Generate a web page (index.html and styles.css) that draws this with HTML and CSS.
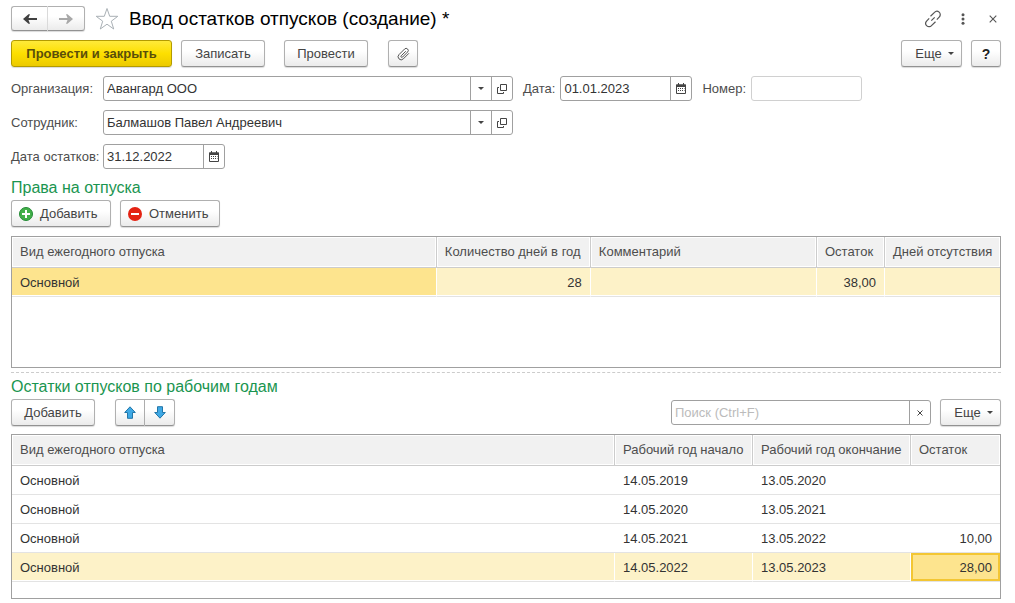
FILE: index.html
```html
<!DOCTYPE html>
<html lang="ru">
<head>
    <meta charset="UTF-8">
    <meta name="viewport" content="width=device-width, initial-scale=1.0">
    <title>Ввод остатков отпусков (создание) *</title>
    <link rel="stylesheet" href="styles.css">
</head>
<body>
<header class="title-bar">
    <div class="button-group nav-group">
        <button type="button" class="button" aria-label="Назад">
            <svg width="14" height="12" viewBox="0 0 14 12"><path d="M0 6 5.500 1.200H7L5.500 4.900H14V7.100H5.500L7 10.800H5.500Z" fill="#404040"/></svg>
        </button>
        <button type="button" class="button" aria-label="Вперед">
            <svg width="14" height="12" viewBox="0 0 14 12"><path d="M14 6 8.500 1.200H7L8.500 4.900H0V7.100H8.500L7 10.800H8.500Z" fill="#a8a8a8"/></svg>
        </button>
    </div>
    <button type="button" class="plain-button star-button" aria-label="В избранное">
        <svg width="24" height="24" viewBox="0 0 24 24"><path d="M12 1.500 14.700 9.300H22.800L16.300 14.200 18.700 22 12 17.200 5.300 22 7.700 14.200 1.200 9.300H9.300Z" fill="#fff" stroke="#a9b0b5"/></svg>
    </button>
    <h1 class="page-title">Ввод остатков отпусков (создание) *</h1>
    <div class="window-tools">
        <button type="button" class="plain-button" aria-label="Получить ссылку">
            <svg width="18" height="18" viewBox="0 0 18 18" fill="none" stroke="#555" stroke-width="1.200"><path d="M6.500 6.200 10.500 2.400a3.200 3.200 0 0 1 4.900 4.400L12.800 9.600M11.500 11.800 7.500 15.600a3.200 3.200 0 0 1-4.900-4.400L5.200 8.400M7.300 10.700 10.700 7.300"/></svg>
        </button>
        <button type="button" class="plain-button" aria-label="Меню">
            <svg width="4" height="12" viewBox="0 0 4 12" fill="#555"><circle cx="2" cy="1.800" r="1.500"/><circle cx="2" cy="6" r="1.500"/><circle cx="2" cy="10.200" r="1.500"/></svg>
        </button>
        <button type="button" class="plain-button" aria-label="Закрыть">
            <svg width="8" height="8" viewBox="0 0 8 8"><path d="M.7.7 7.300 7.300M7.300.7.7 7.300" stroke="#555" stroke-width="1.100"/></svg>
        </button>
    </div>
</header>

<div class="toolbar command-bar">
    <button type="button" class="button primary">Провести и закрыть</button>
    <button type="button" class="button save-button">Записать</button>
    <button type="button" class="button post-button">Провести</button>
    <button type="button" class="button icon-button" aria-label="Присоединенные файлы">
        <svg width="14" height="14" viewBox="0 0 14 14" fill="none" stroke="#555"><path d="M9.800 4.200 5.200 8.800a.9.9 0 0 0 1.300 1.300L11.600 5a2.100 2.100 0 0 0-3-3L3 7.600a3 3 0 0 0 4.300 4.300L12.900 6.300"/></svg>
    </button>
    <button type="button" class="button more-button push-right">Еще <span class="caret"></span></button>
    <button type="button" class="button icon-button help-button">?</button>
</div>

<form class="fields">
    <div class="field-row">
        <label for="organization" class="main-label">Организация:</label>
        <div class="field wide">
            <input type="text" id="organization" value="Авангард ООО">
            <button type="button" class="field-button" aria-label="Выбрать организацию"><span class="caret"></span></button>
            <button type="button" class="field-button" aria-label="Открыть организацию">
                <svg width="10" height="10" viewBox="0 0 10 10" fill="none" stroke="#444"><path d="M3.500.5h6v6h-6zM2 3.500H.5v6h6V8"/></svg>
            </button>
        </div>
        <label for="date">Дата:</label>
        <div class="field date">
            <input type="text" id="date" value="01.01.2023">
            <button type="button" class="field-button" aria-label="Выбрать дату">
                <svg width="10" height="11" viewBox="0 0 10 11"><path d="M.5 2h9v8.500h-9z" fill="#fff" stroke="#444"/><path d="M0 1.500h10V4H0zM2 0h1v2H2zM7 0h1v2H7z" fill="#444"/><path d="M2 5.500h6.500M2 7.500h6.500" stroke="#444" stroke-dasharray="1 1"/></svg>
            </button>
        </div>
        <label for="number">Номер:</label>
        <div class="field number">
            <input type="text" id="number">
        </div>
    </div>
    <div class="field-row">
        <label for="employee" class="main-label">Сотрудник:</label>
        <div class="field wide">
            <input type="text" id="employee" value="Балмашов Павел Андреевич">
            <button type="button" class="field-button" aria-label="Выбрать сотрудника"><span class="caret"></span></button>
            <button type="button" class="field-button" aria-label="Открыть сотрудника">
                <svg width="10" height="10" viewBox="0 0 10 10" fill="none" stroke="#444"><path d="M3.500.5h6v6h-6zM2 3.500H.5v6h6V8"/></svg>
            </button>
        </div>
    </div>
    <div class="field-row">
        <label for="balance-date" class="main-label">Дата остатков:</label>
        <div class="field balance-date">
            <input type="text" id="balance-date" value="31.12.2022">
            <button type="button" class="field-button" aria-label="Выбрать дату остатков">
                <svg width="10" height="11" viewBox="0 0 10 11"><path d="M.5 2h9v8.500h-9z" fill="#fff" stroke="#444"/><path d="M0 1.500h10V4H0zM2 0h1v2H2zM7 0h1v2H7z" fill="#444"/><path d="M2 5.500h6.500M2 7.500h6.500" stroke="#444" stroke-dasharray="1 1"/></svg>
            </button>
        </div>
    </div>
</form>

<section class="rights">
    <h2>Права на отпуска</h2>
    <div class="toolbar">
        <button type="button" class="button with-icon">
            <svg width="14" height="14" viewBox="0 0 14 14"><circle cx="7" cy="7" r="6.500" fill="#43b04a" stroke="#248a35"/><path d="M7 3v8M3 7h8" stroke="#fff" stroke-width="2"/></svg>
            Добавить
        </button>
        <button type="button" class="button with-icon">
            <svg width="14" height="14" viewBox="0 0 14 14"><circle cx="7" cy="7" r="7" fill="#e42313"/><path d="M3 7h8" stroke="#fff" stroke-width="2"/></svg>
            Отменить
        </button>
    </div>
    <div class="table-box rights-box">
        <table>
            <colgroup>
                <col class="col-kind">
                <col class="col-days">
                <col>
                <col class="col-rest">
                <col class="col-absence">
            </colgroup>
            <thead>
            <tr>
                <th>Вид ежегодного отпуска</th>
                <th>Количество дней в год</th>
                <th>Комментарий</th>
                <th>Остаток</th>
                <th>Дней отсутствия</th>
            </tr>
            </thead>
            <tbody>
            <tr class="selected">
                <td class="current">Основной</td>
                <td class="num">28</td>
                <td></td>
                <td class="num">38,00</td>
                <td></td>
            </tr>
            </tbody>
        </table>
    </div>
</section>

<section class="balances">
    <h2>Остатки отпусков по рабочим годам</h2>
    <div class="toolbar">
        <button type="button" class="button add-button">Добавить</button>
        <div class="button-group move-group">
            <button type="button" class="button" aria-label="Переместить вверх">
                <svg width="12" height="13" viewBox="0 0 12 13"><path d="M6 .8 11.300 6.500H8.500V12.300H3.500V6.500H.7Z" fill="#3fa9e5" stroke="#2276a8"/></svg>
            </button>
            <button type="button" class="button" aria-label="Переместить вниз">
                <svg width="12" height="13" viewBox="0 0 12 13"><path d="M6 12.200 11.300 6.500H8.500V.7H3.500V6.500H.7Z" fill="#3fa9e5" stroke="#2276a8"/></svg>
            </button>
        </div>
        <div class="field search push-right">
            <input type="text" placeholder="Поиск (Ctrl+F)" aria-label="Поиск">
            <button type="button" class="field-button" aria-label="Очистить">
                <svg width="6" height="6" viewBox="0 0 6 6"><path d="M.5.5 5.500 5.500M5.500.5.5 5.500" stroke="#444"/></svg>
            </button>
        </div>
        <button type="button" class="button more-button">Еще <span class="caret"></span></button>
    </div>
    <div class="table-box balances-box">
        <table>
            <colgroup>
                <col>
                <col class="col-start">
                <col class="col-end">
                <col class="col-balance">
            </colgroup>
            <thead>
            <tr>
                <th>Вид ежегодного отпуска</th>
                <th>Рабочий год начало</th>
                <th>Рабочий год окончание</th>
                <th>Остаток</th>
            </tr>
            </thead>
            <tbody>
            <tr>
                <td>Основной</td>
                <td>14.05.2019</td>
                <td>13.05.2020</td>
                <td></td>
            </tr>
            <tr>
                <td>Основной</td>
                <td>14.05.2020</td>
                <td>13.05.2021</td>
                <td></td>
            </tr>
            <tr>
                <td>Основной</td>
                <td>14.05.2021</td>
                <td>13.05.2022</td>
                <td class="num">10,00</td>
            </tr>
            <tr class="selected">
                <td>Основной</td>
                <td>14.05.2022</td>
                <td>13.05.2023</td>
                <td class="num current focused">28,00</td>
            </tr>
            </tbody>
        </table>
    </div>
</section>
</body>
</html>
```
FILE: styles.css
```css
* {
    box-sizing: border-box;
}
body {
    font-family: "Liberation Sans", Arial, sans-serif;
    font-size: 13px;
    margin: 0;
    padding: 6px 14px 4px 11px;
    background-color: #fff;
    color: #333;
}
button, input {
    font: inherit;
    color: inherit;
}
svg {
    display: block;
    flex: none;
}

/* Buttons */
.button {
    display: flex;
    align-items: center;
    justify-content: center;
    height: 27px;
    padding: 0 13px;
    border: 1px solid #b0b0b0;
    border-bottom-color: #929292;
    border-radius: 3px;
    background: linear-gradient(#fff 40%, #ebebeb);
    box-shadow: 0 1px 1px rgba(0, 0, 0, 0.15);
    color: #444;
    white-space: nowrap;
    cursor: pointer;
}
.primary {
    width: 161px;
    padding: 0;
    border-color: #b39b00;
    background: linear-gradient(#ffea3a, #fddf00 50%, #ecca00);
    color: #5a4e0a;
    font-weight: bold;
}
.icon-button {
    width: 30px;
    padding: 0;
}
.save-button, .post-button, .add-button {
    width: 84px;
    padding: 0;
}
.more-button {
    width: 61px;
    padding: 0 0 0 6px;
    gap: 6px;
}
.help-button {
    font-size: 14px;
    font-weight: bold;
    color: #222;
}
.with-icon {
    justify-content: flex-start;
    width: 100px;
    padding: 0 0 0 7px;
    gap: 7px;
}
.plain-button {
    display: flex;
    align-items: center;
    justify-content: center;
    padding: 0;
    border: none;
    background: none;
    cursor: pointer;
}
.button-group {
    display: flex;
}
.button-group .button {
    padding: 0;
}
.button-group .button:first-child {
    border-radius: 3px 0 0 3px;
}
.button-group .button:last-child {
    border-left: none;
    border-radius: 0 3px 3px 0;
}
.nav-group .button {
    width: 37px;
    height: 25px;
}
.nav-group .button:first-child {
    border-right-color: #ddd;
}
.move-group {
    margin-left: 11px;
}
.move-group .button {
    width: 30px;
}
.caret {
    border: 3px solid transparent;
    border-top-color: #444;
    border-bottom: none;
}

/* Title */
.title-bar {
    display: flex;
    align-items: center;
    height: 25px;
}
.star-button {
    margin: 0 10px;
}
.page-title {
    margin: 0;
    font-size: 19px;
    font-weight: normal;
    color: #000;
}
.window-tools {
    display: flex;
    align-items: center;
    margin: 0 -7px 0 auto;
}
.window-tools .plain-button {
    width: 30px;
    height: 24px;
}

.toolbar {
    display: flex;
    align-items: center;
    gap: 9px;
}
.command-bar {
    margin: 9px 0;
}
.post-button {
    margin: 0 11px 0 10px;
}
.push-right {
    margin-left: auto;
}

/* Fields */
.fields {
    display: flex;
    flex-direction: column;
    gap: 9px;
    color: #4d4d4d;
}
.field-row {
    display: flex;
    align-items: center;
}
.field-row label {
    flex: none;
    margin: 0 5px 0 10px;
}
.field-row .main-label {
    width: 92px;
    margin: 0;
}
.field {
    display: flex;
    height: 25px;
    border: 1px solid #a0a0a0;
    border-radius: 3px;
    background-color: #fff;
    color: #333;
}
.field input {
    flex: 1;
    min-width: 0;
    padding: 0 3px;
    border: none;
    border-radius: 3px;
    outline: none;
    background: none;
}
.field input::placeholder {
    color: #bbb;
    opacity: 1;
}
.field-button {
    display: flex;
    align-items: center;
    justify-content: center;
    width: 21px;
    padding: 0;
    border: none;
    border-left: 1px solid #a0a0a0;
    background: none;
    cursor: pointer;
}
.wide {
    flex: 0 1 410px;
}
.date {
    width: 132px;
}
.number {
    width: 111px;
    border-color: #d0d0d0;
}
.balance-date {
    width: 122px;
}
.search {
    flex: 0 1 260px;
}

/* Sections */
h2 {
    margin: 0 0 2px;
    font-size: 16px;
    font-weight: normal;
    line-height: 20px;
    color: #1a9550;
}
.rights {
    padding: 9px 0 4px;
    border-bottom: 1px dashed #ccc;
}
.balances {
    padding-top: 4px;
}

/* Tables */
.table-box {
    border: 1px solid #a0a0a0;
}
.rights-box {
    min-height: 132px;
    margin-top: 9px;
}
.balances-box {
    min-height: 165px;
    margin-top: 8px;
}
table {
    width: 100%;
    table-layout: fixed;
    border-collapse: separate;
    border-spacing: 0;
}
th, td {
    padding: 0 8px;
    text-align: left;
    white-space: nowrap;
}
th {
    height: 31px;
    padding-bottom: 2px;
    border-right: 1px solid #ccc;
    border-bottom: 1px solid #ccc;
    background-color: #f1f1f1;
    box-shadow: inset 0 0 0 1px #fff;
    color: #4d4d4d;
    font-weight: normal;
}
th:last-child {
    border-right: none;
}
td {
    height: 29px;
    border-bottom: 1px solid #e3e3e3;
}
.selected td {
    border-right: 1px solid #fff;
    background-color: #fdf2c8;
    box-shadow: inset 0 -1px #fff;
}
.selected td:last-child {
    border-right: none;
}
.selected .current {
    background-color: #fde48e;
}
.selected .focused {
    box-shadow: inset 0 0 0 2px #f3c633;
}
.num {
    text-align: right;
}
.col-kind {
    width: 43%;
}
.col-days {
    width: 154px;
}
.col-rest {
    width: 68px;
}
.col-absence {
    width: 115px;
}
.col-start {
    width: 138px;
}
.col-end {
    width: 158px;
}
.col-balance {
    width: 89px;
}
```
